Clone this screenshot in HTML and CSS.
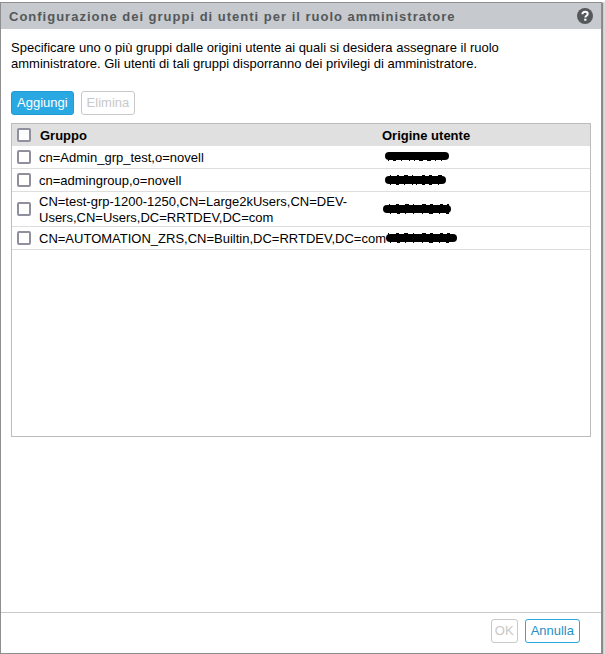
FILE: index.html
```html
<!DOCTYPE html>
<html lang="it">
<head>
<meta charset="utf-8">
<meta name="viewport" content="width=device-width, initial-scale=1">
<title>Configurazione dei gruppi di utenti</title>
<link rel="stylesheet" href="styles.css">
</head>
<body>
<main class="dialog">
  <header class="dialog-header">
    <h1>Configurazione dei gruppi di utenti per il ruolo amministratore</h1>
    <button class="help" type="button" aria-label="Guida">
      <svg viewBox="0 0 16 16" width="16" height="16" aria-hidden="true">
        <circle cx="8" cy="8" r="8" fill="#54585a"/>
        <path d="M5.4 6.2C5.4 4.6 6.5 3.8 8.1 3.8s2.6.9 2.6 2.2c0 1.7-2.4 1.8-2.4 3.6" fill="none" stroke="#fff" stroke-width="2"/>
        <path d="M7.2 10.7h2.2v2H7.2z" fill="#fff"/>
      </svg>
    </button>
  </header>
  <section class="dialog-body">
    <p class="intro">Specificare uno o più gruppi dalle origini utente ai quali si desidera assegnare il ruolo amministratore. Gli utenti di tali gruppi disporranno dei privilegi di amministratore.</p>
    <div class="toolbar">
      <button class="btn btn-primary" type="button">Aggiungi</button>
      <button class="btn" type="button" disabled>Elimina</button>
    </div>
    <div class="grid">
      <table>
        <colgroup><col class="col-check"><col class="col-group"><col></colgroup>
        <thead>
          <tr>
            <th><input type="checkbox" aria-label="Seleziona tutto"></th>
            <th scope="col">Gruppo</th>
            <th scope="col">Origine utente</th>
          </tr>
        </thead>
        <tbody>
          <tr>
            <td><input type="checkbox" id="g1"></td>
            <td><label for="g1">cn=Admin_grp_test,o=novell</label></td>
            <td><svg class="redacted" viewBox="0 0 80 14" width="80" height="14" aria-hidden="true"><path d="M7 6H63" stroke-width="8"/><path d="M6 10h1M11 10h3M19 10h1M27 10h1M32 10h1M37 10h4M45 10h4M53 10h1M59 10h1" stroke-width="2"/></svg></td>
          </tr>
          <tr>
            <td><input type="checkbox" id="g2"></td>
            <td><label for="g2">cn=admingroup,o=novell</label></td>
            <td><svg class="redacted" viewBox="0 0 80 14" width="80" height="14" aria-hidden="true"><path d="M7 7H60" stroke-width="8"/><path d="M8 3h1M15 3h2M22 3h4M30 3h1M40 3h3M47 3h3M56 3h4M8 11h1M14 11h3M22 11h1M30 11h1M34 11h1M40 11h3M47 11h3M56 11h1" stroke-width="2"/></svg></td>
          </tr>
          <tr>
            <td><input type="checkbox" id="g3"></td>
            <td><label for="g3">CN=test-grp-1200-1250,CN=Large2kUsers,CN=DEV-Users,CN=Users,DC=RRTDEV,DC=com</label></td>
            <td><svg class="redacted" viewBox="0 0 80 14" width="80" height="14" aria-hidden="true"><path d="M5 7H65" stroke-width="8"/><path d="M7 3h1M14 3h3M23 3h4M31 3h1M40 3h4M48 3h3M58 3h3M65 3h2M8 11h1M15 11h3M23 11h1M31 11h1M40 11h1M47 11h4M57 11h1M64 11h3" stroke-width="2"/></svg></td>
          </tr>
          <tr>
            <td><input type="checkbox" id="g4"></td>
            <td><label for="g4">CN=AUTOMATION_ZRS,CN=Builtin,DC=RRTDEV,DC=com</label></td>
            <td><svg class="redacted" viewBox="0 0 80 14" width="80" height="14" aria-hidden="true"><path d="M8 7H71" stroke-width="8"/><path d="M6 3h1M14 3h3M22 3h4M31 3h1M40 3h4M48 3h3M58 3h3M65 3h3M8 11h1M15 11h3M23 11h1M31 11h1M40 11h1M47 11h4M57 11h1M64 11h3" stroke-width="2"/></svg></td>
          </tr>
        </tbody>
      </table>
    </div>
  </section>
  <footer class="dialog-footer">
    <button class="btn btn-narrow" type="button" disabled>OK</button>
    <button class="btn btn-outline" type="button">Annulla</button>
  </footer>
</main>
</body>
</html>
```
FILE: styles.css
```css
* {
  box-sizing: border-box;
}

body {
  display: flex;
  min-height: 100vh;
  margin: 0;
  padding: 2px 3px 0 0;
  background: linear-gradient(#fff, #fff) top / 100% 2px no-repeat #dcdcdc;
  color: #000;
  font: 13px/16px "Liberation Sans", Arial, sans-serif;
}

.dialog {
  display: flex;
  flex: 1;
  flex-direction: column;
  min-width: 0;
  border: 1px solid #8e8e8e;
  background: #fff;
  box-shadow: 1px 1px 1px #888;
}

.dialog-header {
  display: flex;
  align-items: center;
  justify-content: space-between;
  height: 26px;
  padding: 0 8px;
  background: #c6c9cd;
}

h1 {
  margin: 0;
  padding-top: 1px;
  color: #54585a;
  font-size: 13px;
  letter-spacing: 1px;
}

.help {
  display: flex;
  padding: 0;
  border: 0;
  background: none;
}

.dialog-body {
  flex: 1;
  padding: 11px 10px 0;
}

.intro {
  margin: 0;
}

.toolbar {
  display: flex;
  gap: 7px;
  margin: 19px 0 8px;
}

.btn {
  height: 24px;
  padding: 0 5px;
  border: 1px solid #c8c8c8;
  border-radius: 3px;
  background: #fff;
  color: #c8c8c8;
  font: 13px/16px "Liberation Sans", Arial, sans-serif;
}

.btn-primary {
  border-color: #1f9cd8;
  background: #29a8e1;
  color: #fff;
}

.btn-outline {
  border-color: #29a8e1;
  color: #1f8fc8;
}

.btn-narrow {
  padding: 0 3px;
}

.grid {
  min-height: 314px;
  border: 1px solid #bcbcbc;
}

table {
  width: 100%;
  border-spacing: 0;
  table-layout: fixed;
}

.col-check {
  width: 27px;
}

.col-group {
  width: 343px;
}

th,
td {
  padding: 3px 0;
  text-align: left;
  vertical-align: middle;
}

th {
  background: #e0e0e0;
}

th:nth-child(n + 2) {
  padding: 4px 0 2px;
}

th:nth-child(2) {
  padding-left: 1px;
}

td {
  border-bottom: 1px solid #dedede;
}

td:nth-child(2) {
  padding: 2px 0 0;
}

input[type="checkbox"] {
  display: block;
  width: 14px;
  height: 14px;
  margin: 0 0 0 5px;
  appearance: none;
  border: 2px solid #8f8f9d;
  border-radius: 2px;
  background: #fff;
}

tbody tr {
  height: 23px;
}

tbody label {
  display: block;
}

.redacted {
  display: block;
  fill: none;
  stroke: #000;
}

.redacted path:first-child {
  stroke-linecap: round;
}

.dialog-footer {
  display: flex;
  justify-content: flex-end;
  gap: 7px;
  padding: 6px 21px 10px;
  border-top: 1px solid #c8c8c8;
}
```
